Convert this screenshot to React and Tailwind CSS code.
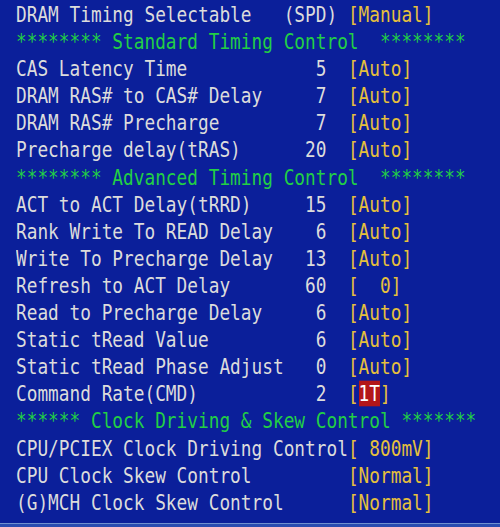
const W = "text-[#dcdcdc]";
const Y = "text-[#e6c03c]";
const G = "text-[#22cf45]";

const item = (label, value, setting) => [
  [label.padEnd(29 - value.length) + value + "  ", W],
  [setting, Y],
];

const rows = [
  [["DRAM Timing Selectable   (SPD) ", W], ["[Manual]", Y]],
  [["******** Standard Timing Control  ********", G]],
  item("CAS Latency Time", "5", "[Auto]"),
  item("DRAM RAS# to CAS# Delay", "7", "[Auto]"),
  item("DRAM RAS# Precharge", "7", "[Auto]"),
  item("Precharge delay(tRAS)", "20", "[Auto]"),
  [["******** Advanced Timing Control  ********", G]],
  item("ACT to ACT Delay(tRRD)", "15", "[Auto]"),
  item("Rank Write To READ Delay", "6", "[Auto]"),
  item("Write To Precharge Delay", "13", "[Auto]"),
  item("Refresh to ACT Delay", "60", "[  0]"),
  item("Read to Precharge Delay", "6", "[Auto]"),
  item("Static tRead Value", "6", "[Auto]"),
  item("Static tRead Phase Adjust", "0", "[Auto]"),
  [
    ["Command Rate(CMD)".padEnd(28) + "2  ", W],
    ["[", Y],
    ["1T", "text-white bg-[#b3161a]"],
    ["]", Y],
  ],
  [["****** Clock Driving & Skew Control *******", G]],
  [["CPU/PCIEX Clock Driving Control", W], ["[ 800mV]", Y]],
  [["CPU Clock Skew Control".padEnd(31), W], ["[Normal]", Y]],
  [["(G)MCH Clock Skew Control".padEnd(31), W], ["[Normal]", Y]],
];

export default function App() {
  return (
    <div className="flex h-[527px] w-[500px] flex-col overflow-hidden bg-[#0b1f9a] font-['DejaVu_Sans_Mono',monospace] text-[17.8px]">
      <div className="pt-[1px] pl-[16px]">
        {rows.map((segs, i) => (
          <div key={i} className="h-[27.1px] whitespace-pre leading-[27.1px]">
            <span className="inline-block scale-y-[1.22]">
              {segs.map(([text, cls], j) => (
                <span key={j} className={cls}>
                  {text}
                </span>
              ))}
            </span>
          </div>
        ))}
      </div>
      <div className="mt-auto h-[4px] border-t border-[#6f90d0] bg-[#2a4cb0]" />
    </div>
  );
}
